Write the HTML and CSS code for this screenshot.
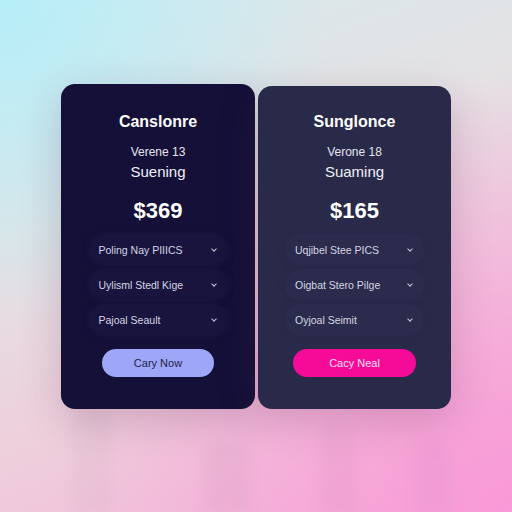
FILE: index.html
```html
<!DOCTYPE html>
<html lang="en">
<head>
    <meta charset="UTF-8">
    <meta name="viewport" content="width=device-width, initial-scale=1.0">
    <title>Pricing</title>
    <link rel="stylesheet" href="styles.css">
</head>
<body>
    <div class="backdrop">
        <span class="pillar p1"></span>
        <span class="pillar p2"></span>
        <span class="pillar p3"></span>
        <span class="pillar p4"></span>
    </div>

    <div class="plans">
        <!-- Plan one -->
        <div class="card card-dark">
            <h2>Canslonre</h2>
            <div class="version">Verene 13</div>
            <div class="plan-name">Suening</div>
            <div class="price">$369</div>

            <div class="options">
                <div class="option"><span>Poling Nay PIIICS</span><span class="chev"></span></div>
                <div class="option"><span>Uylisml Stedl Kige</span><span class="chev"></span></div>
                <div class="option"><span>Pajoal Seault</span><span class="chev"></span></div>
            </div>

            <button class="buy buy-lilac">Cary Now</button>
        </div>

        <!-- Plan two -->
        <div class="card card-slate">
            <h2>Sunglonce</h2>
            <div class="version">Verone 18</div>
            <div class="plan-name">Suaming</div>
            <div class="price">$165</div>

            <div class="options">
                <div class="option"><span>Uqjibel Stee PICS</span><span class="chev"></span></div>
                <div class="option"><span>Oigbat Stero Pilge</span><span class="chev"></span></div>
                <div class="option"><span>Oyjoal Seimit</span><span class="chev"></span></div>
            </div>

            <button class="buy buy-pink">Cacy Neal</button>
        </div>
    </div>
</body>
</html>
```

FILE: styles.css
```css
body {
    margin: 0;
    width: 512px;
    height: 512px;
    overflow: hidden;
    font-family: "Liberation Sans", Arial, sans-serif;
    color: #fff;
    background:
        radial-gradient(circle at 0% 0%, rgba(180, 238, 248, 0.95) 0%, rgba(180, 238, 248, 0) 45%),
        radial-gradient(circle at 100% 100%, rgba(250, 150, 215, 0.9) 0%, rgba(250, 150, 215, 0) 60%),
        linear-gradient(160deg, #d6eaee 0%, #e4e2e4 35%, #eecfdc 65%, #f4b4d8 100%);
    position: relative;
}

/* soft blurred columns near the bottom */
.backdrop {
    position: absolute;
    inset: 0;
    pointer-events: none;
}

.pillar {
    position: absolute;
    bottom: 0;
    height: 110px;
    border-radius: 20px 20px 0 0;
    filter: blur(6px);
}

.p1 { left: 72px; width: 40px; background: rgba(200, 170, 185, 0.15); }
.p2 { left: 205px; width: 45px; background: rgba(200, 150, 180, 0.18); height: 70px; }
.p3 { left: 320px; width: 35px; background: rgba(210, 140, 190, 0.15); height: 85px; }
.p4 { left: 412px; width: 40px; background: rgba(210, 140, 200, 0.18); height: 70px; }

.plans {
    position: relative;
    display: flex;
    justify-content: center;
    align-items: flex-start;
    gap: 3px;
    padding-top: 84px;
}

.card {
    box-sizing: border-box;
    display: flex;
    flex-direction: column;
    align-items: center;
    padding-top: 28px;
    border-radius: 14px;
    box-shadow: 0 12px 40px rgba(90, 40, 80, 0.22);
}

.card-dark {
    width: 194px;
    height: 325px;
    background: #141038;
}

.card-slate {
    width: 193px;
    height: 323px;
    margin-top: 2px;
    padding-top: 26px;
    background: #29294a;
}

.card h2 {
    margin: 0;
    font-size: 16px;
    line-height: 20px;
    font-weight: 700;
}

.version {
    margin-top: 12px;
    font-size: 12px;
    line-height: 16px;
    color: #e4e4ee;
}

.plan-name {
    margin-top: 3px;
    font-size: 15px;
    line-height: 18px;
    color: #f0f0f6;
}

.price {
    margin-top: 17px;
    font-size: 22px;
    line-height: 26px;
    font-weight: 700;
}

.options {
    margin-top: 10px;
    display: flex;
    flex-direction: column;
    gap: 3px;
}

.option {
    box-sizing: border-box;
    width: 139px;
    height: 32px;
    padding: 0 10px;
    display: flex;
    align-items: center;
    justify-content: space-between;
    border-radius: 16px;
    font-size: 10.5px;
    color: #d6d6e4;
}

.card-dark .option {
    background: #18143e;
    box-shadow: 0 0 6px rgba(30, 25, 70, 0.6);
}

.card-slate .option {
    background: #2b2b4d;
    box-shadow: 0 0 6px rgba(40, 40, 75, 0.6);
}

.chev {
    width: 3px;
    height: 3px;
    margin-right: 2px;
    margin-top: -2px;
    border-right: 1.2px solid #c8c8da;
    border-bottom: 1.2px solid #c8c8da;
    transform: rotate(45deg);
}

.buy {
    margin-top: 13px;
    height: 28px;
    border: none;
    border-radius: 14px;
    font-family: inherit;
    font-size: 11px;
    cursor: pointer;
}

.buy-lilac {
    width: 112px;
    background: #9ea6f7;
    color: #1e1f48;
}

.buy-pink {
    width: 123px;
    background: #f60a98;
    color: #ffe0f2;
}
```
